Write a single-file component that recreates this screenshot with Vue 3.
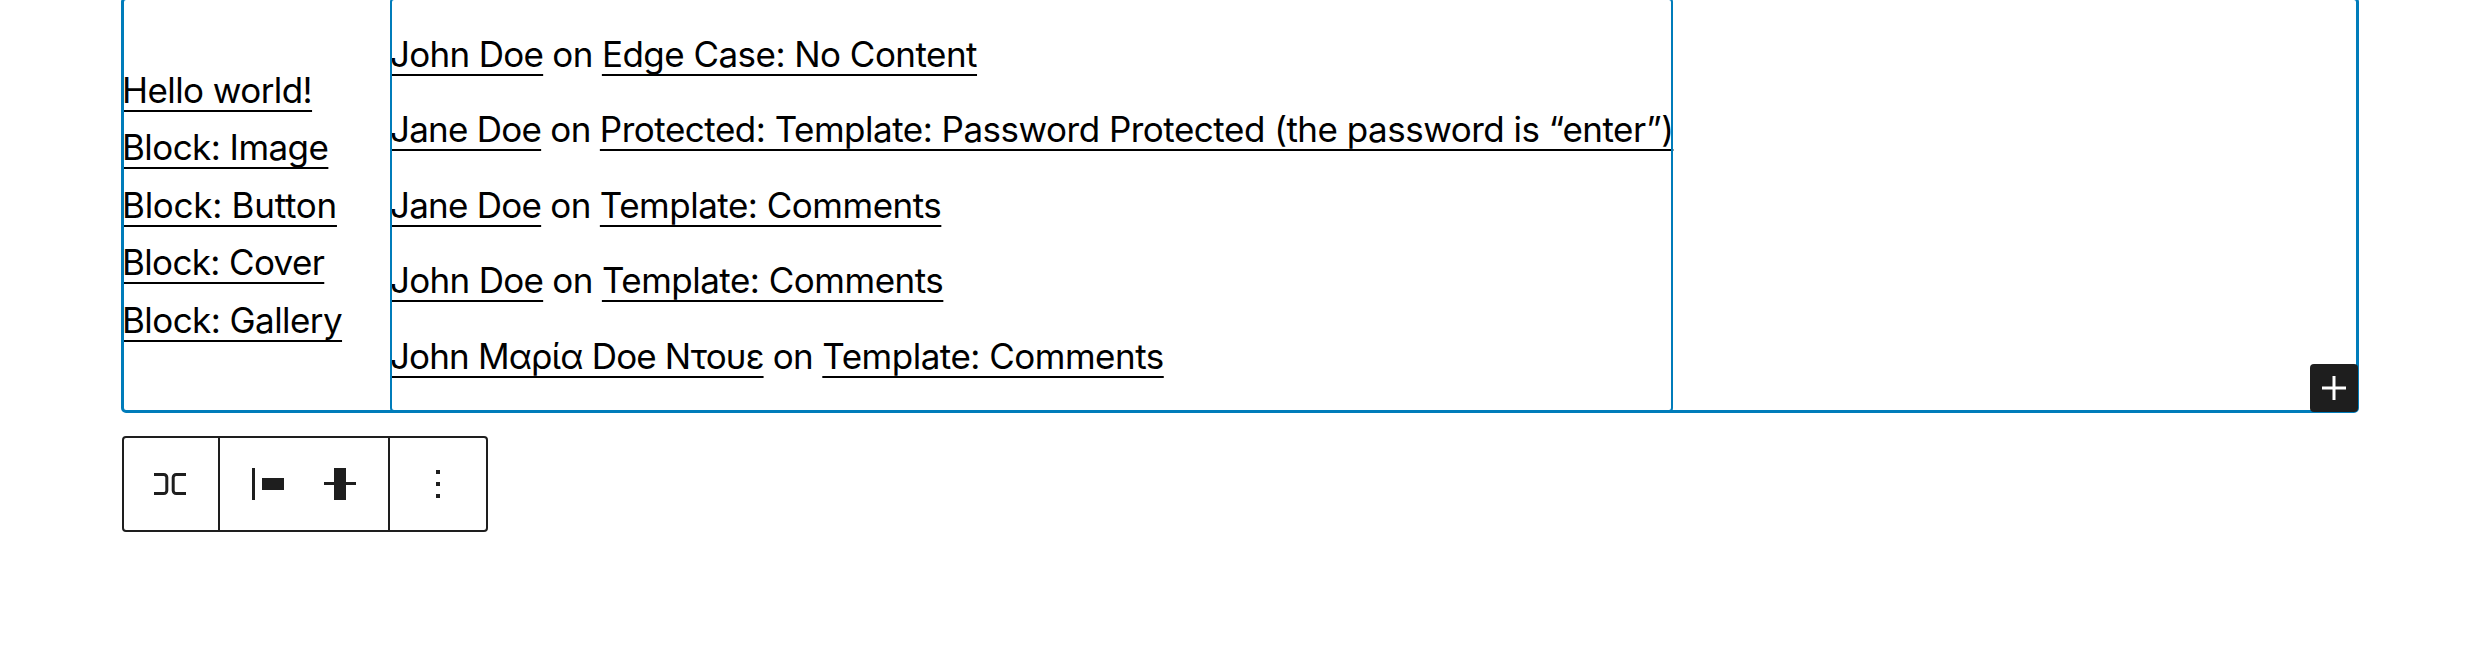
<script setup>
const posts = [
  { title: 'Hello world!', track: -0.57 },
  { title: 'Block: Image', track: -0.56 },
  { title: 'Block: Button', track: -0.27 },
  { title: 'Block: Cover', track: -0.64 },
  { title: 'Block: Gallery', track: -0.57 },
]

const comments = [
  { author: 'John Doe', authorTrack: -0.71, post: 'Edge Case: No Content', postTrack: -0.53 },
  { author: 'Jane Doe', authorTrack: -0.76, post: 'Protected: Template: Password Protected (the password is “enter”)', postTrack: -0.5 },
  { author: 'Jane Doe', authorTrack: -0.76, post: 'Template: Comments', postTrack: -0.5 },
  { author: 'John Doe', authorTrack: -0.71, post: 'Template: Comments', postTrack: -0.5 },
  { author: 'John Μαρία Doe Ντουε', authorTrack: -0.86, post: 'Template: Comments', postTrack: -0.5 },
]

const spacing = (v) => ({ letterSpacing: `${v}px` })
</script>

<template>
  <main class="editor">
    <section class="row-block">
      <ul class="posts">
        <li v-for="p in posts" :key="p.title">
          <a class="link" :style="spacing(p.track)">{{ p.title }}</a>
        </li>
      </ul>
      <div class="comments-block">
        <ol class="comments">
          <li v-for="(c, i) in comments" :key="i"><a class="link" :style="spacing(c.authorTrack)">{{ c.author }}</a><span class="on"> on </span><a class="link" :style="spacing(c.postTrack)">{{ c.post }}</a></li>
        </ol>
      </div>
      <button class="appender" aria-label="Add block">
        <svg width="48" height="48" viewBox="0 0 48 48">
          <path d="M24 12v24M12 24h24" stroke="#fff" stroke-width="3" fill="none" />
        </svg>
      </button>
    </section>

    <div class="toolbar">
      <div class="group group-block">
        <svg width="48" height="48" viewBox="0 0 48 48" fill="none" stroke="#1e1e1e" stroke-width="3">
          <path d="M8 14.5h9.8a3 3 0 0 1 3 3v13a3 3 0 0 1-3 3H8M40 14.5H30.2a3 3 0 0 0-3 3v13a3 3 0 0 0 3 3H40" />
        </svg>
      </div>
      <div class="group group-align">
        <svg width="48" height="48" viewBox="0 0 48 48" fill="#1e1e1e">
          <path d="M8 8h3v32H8zM18 18h22v12H18z" />
        </svg>
        <svg width="48" height="48" viewBox="0 0 48 48" fill="#1e1e1e">
          <path d="M8 22h32v3H8zM18 8h12v32H18z" />
        </svg>
      </div>
      <div class="group group-more">
        <svg width="48" height="48" viewBox="0 0 48 48" fill="#1e1e1e">
          <path d="M22 10h4v4h-4zM22 22h4v4h-4zM22 34h4v4h-4z" />
        </svg>
      </div>
    </div>
  </main>
</template>

<style>
body {
  background: #fff;
}
</style>

<style scoped>
.editor {
  height: 672px;
  overflow: hidden;
  box-sizing: border-box;
  padding-left: 122px;
  font-family: Inter, "Liberation Sans", sans-serif;
  font-size: 35px;
  line-height: 57.6px;
  color: #000;
}

.row-block {
  position: relative;
  display: flex;
  width: 2236px;
  height: 411px;
}

.row-block::after {
  content: "";
  position: absolute;
  inset: -3px -1px -2px -1px;
  border: 3px solid #007cba;
  border-radius: 5px;
  pointer-events: none;
}

ul,
ol {
  margin: 0;
  padding: 0;
  list-style: none;
}

li {
  white-space: pre;
}

.posts {
  width: 269px;
  box-sizing: border-box;
  padding-top: 0.4px;
  display: flex;
  flex-direction: column;
  justify-content: center;
}

.comments-block {
  position: relative;
  width: 1281px;
  box-sizing: border-box;
  padding-top: 0.4px;
  display: flex;
  align-items: center;
}

.comments-block::after {
  content: "";
  position: absolute;
  inset: -2px -1px -1px -1px;
  border: 2px solid #007cba;
  border-radius: 4px;
  pointer-events: none;
}

.comments {
  display: grid;
  row-gap: 18px;
  margin-left: -1px;
}

.link {
  text-decoration: underline;
  text-decoration-thickness: 2px;
  text-underline-offset: 7px;
  text-decoration-skip-ink: none;
}

.on {
  letter-spacing: -0.66px;
}

.appender {
  position: absolute;
  right: 0;
  bottom: -1px;
  z-index: 1;
  width: 48px;
  height: 48px;
  padding: 0;
  border: 0;
  border-radius: 4px;
  background: #1e1e1e;
}

.appender svg {
  display: block;
}

.toolbar {
  display: flex;
  width: 366px;
  height: 96px;
  margin-top: 25px;
  box-sizing: border-box;
  border: 2px solid #1e1e1e;
  border-radius: 4px;
}

.group {
  display: flex;
  align-items: center;
  justify-content: center;
  box-sizing: border-box;
}

.group + .group {
  border-left: 2px solid #1e1e1e;
}

.group-block {
  width: 94px;
  padding-right: 2px;
}

.group-align {
  width: 170px;
  gap: 24px;
}

.group-more {
  flex: 1;
}
</style>
